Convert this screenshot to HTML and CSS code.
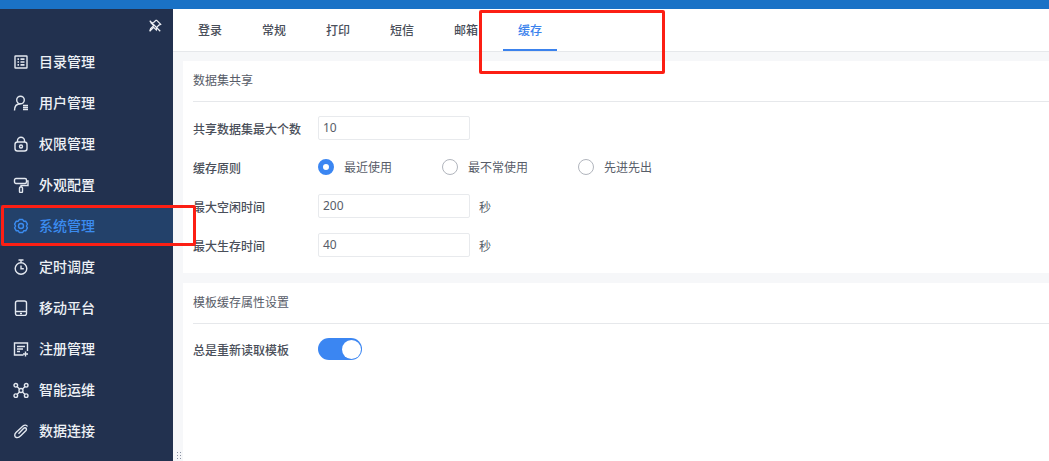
FILE: index.html
```html
<!DOCTYPE html>
<html lang="zh-CN">
<head>
<meta charset="utf-8">
<title>缓存</title>
<link rel="stylesheet" href="styles.css">
</head>
<body>
<div class="topbar"></div>
<div class="main">
  <aside class="sidebar">
    <div class="pin">
      <svg class="pin-icon" viewBox="0 0 16 16"><path d="M10 1.5l4.500 4.500-2 1-2.500 2.500-.5 3L6.500 9.500 3 13 2 14l1-3 3.500-3.500L3.500 4.500l3-.5L9 1.500z"/><path d="M2 2l12 12"/></svg>
    </div>
    <nav class="menu">
      <a class="item"><svg class="ico" viewBox="0 0 16 16"><rect x="2" y="2" width="12" height="12" rx=".5"/><path class="thick" d="M4.500 5.200h1.500M4.500 8h1.500M4.500 10.800h1.500M7.500 5.200H11.500M7.500 8H11.500M7.500 10.800H11.500"/></svg><span class="name">目录管理</span></a>
      <a class="item"><svg class="ico" viewBox="0 0 16 16"><circle cx="7.500" cy="5" r="3.800"/><path d="M1.500 15.500c0-4 2-6.700 6-6.700M10 10.500h5M10 12.500h5M10 14.500h5"/></svg><span class="name">用户管理</span></a>
      <a class="item"><svg class="ico" viewBox="0 0 16 16"><rect x="2" y="6" width="12" height="9" rx="2.500"/><path d="M4.500 6V4.500a3.500 3.300 0 0 1 7 0V6"/><circle cx="8" cy="10.500" r="1.500"/></svg><span class="name">权限管理</span></a>
      <a class="item"><svg class="ico" viewBox="0 0 16 16"><rect x="1.500" y="1.500" width="12" height="5" rx="1.500"/><path d="M13.500 4H15v4.500H8V10"/><rect x="6.500" y="10" width="3" height="5.500" rx="1"/></svg><span class="name">外观配置</span></a>
      <a class="item active"><svg class="ico" viewBox="0 0 16 16"><path class="gear" d="M6.300 1.500H9.700L10.700 3.200 12.700 3.200 14.400 6.200 13.400 8 14.400 9.800 12.700 12.800 10.700 12.800 9.700 14.500H6.300L5.300 12.800 3.300 12.800 1.600 9.800 2.600 8 1.600 6.200 3.300 3.200 5.300 3.200Z"/><circle cx="8" cy="8" r="2.500"/></svg><span class="name">系统管理</span></a>
      <a class="item"><svg class="ico" viewBox="0 0 16 16"><circle cx="8" cy="9.500" r="5.800"/><path d="M5.500 1h5M8 1v2.500M8 6.500v3.300h2.800"/></svg><span class="name">定时调度</span></a>
      <a class="item"><svg class="ico" viewBox="0 0 16 16"><rect x="2.500" y="1" width="11" height="14.500" rx="2"/><path d="M3 11.500h10"/><path class="thick" d="M7 13.500h2"/></svg><span class="name">移动平台</span></a>
      <a class="item"><svg class="ico" viewBox="0 0 16 16"><path d="M10.500 14H1.500V2h13v8"/><path class="thick" d="M4 5.500h8M4 8h6M4 10.500h3"/><path d="M10 13h5M12.500 10.500v5"/></svg><span class="name">注册管理</span></a>
      <a class="item"><svg class="ico" viewBox="0 0 16 16"><circle cx="8" cy="8.500" r="2"/><circle cx="2.800" cy="3.300" r="1.800"/><circle cx="13.200" cy="3.300" r="1.800"/><circle cx="2.800" cy="13.700" r="1.800"/><circle cx="13.200" cy="13.700" r="1.800"/><path d="M4 4.500l2.500 2.500M12 4.500l-2.500 2.500M4 12.500l2.500-2.500M12 12.500l-2.500-2.500"/></svg><span class="name">智能运维</span></a>
      <a class="item"><svg class="ico" viewBox="0 0 16 16"><path d="M14.500 3.500c-1-1.800-3-1.800-4.500-.5L3 9.500c-2 2-1.500 4.500.5 5s3-.5 4.500-2l5-5c1-1.200.3-2.700-1-2.700-.8 0-1.300.5-2 1.200L5.500 10.800"/></svg><span class="name">数据连接</span></a>
    </nav>
  </aside>
  <div class="content">
    <div class="tabs">
      <a class="tab">登录</a>
      <a class="tab">常规</a>
      <a class="tab">打印</a>
      <a class="tab">短信</a>
      <a class="tab">邮箱</a>
      <a class="tab current">缓存</a>
    </div>
    <div class="panels">
      <section class="panel first">
        <h2 class="panel-title">数据集共享</h2>
        <div class="rows">
          <div class="row"><label class="label">共享数据集最大个数</label><div class="input">10</div></div>
          <div class="row">
            <label class="label">缓存原则</label>
            <div class="radios">
              <span class="radio r1 on"><i class="dot"></i><span class="radio-text">最近使用</span></span>
              <span class="radio r2"><i class="dot"></i><span class="radio-text">最不常使用</span></span>
              <span class="radio"><i class="dot"></i><span class="radio-text">先进先出</span></span>
            </div>
          </div>
          <div class="row"><label class="label">最大空闲时间</label><div class="input">200</div><span class="unit">秒</span></div>
          <div class="row"><label class="label">最大生存时间</label><div class="input">40</div><span class="unit">秒</span></div>
        </div>
      </section>
      <section class="panel second">
        <h2 class="panel-title">模板缓存属性设置</h2>
        <div class="rows tight">
          <div class="row"><label class="label">总是重新读取模板</label><span class="switch"><i class="knob"></i></span></div>
        </div>
      </section>
    </div>
  </div>
</div>
<div class="grip"></div>
<div class="mark mark-tab"></div>
<div class="mark mark-side"></div>
</body>
</html>
```
FILE: styles.css
```css
* { box-sizing: border-box; }
html, body { margin: 0; height: 100%; overflow: hidden; }
body {
  display: flex;
  flex-direction: column;
  font-family: "Noto Sans CJK SC", "Liberation Sans", sans-serif;
  font-size: 12px;
  color: #4a5160;
  background: #fff;
  position: relative;
}
.topbar { height: 9px; background: #1a72c6; flex: none; }
.main { flex: 1; display: flex; min-height: 0; }

.sidebar { width: 173px; flex: none; background: #22314f; color: #eef1f6; }
.pin { height: 32px; display: flex; justify-content: flex-end; padding: 10px 11px 0 0; }
.pin-icon { width: 14px; height: 14px; fill: none; stroke: #eef1f6; stroke-width: 1.4; }
.menu { display: flex; flex-direction: column; }
.item {
  height: 41px;
  display: flex;
  align-items: center;
  padding-left: 13px;
  gap: 10px;
  font-size: 14px;
  font-weight: 500;
}
.name { margin-bottom: 2px; }
.ico { width: 16px; height: 16px; fill: none; stroke: #e3e8f0; stroke-width: 1.4; flex: none; }
.thick { stroke-width: 1.7; }
.gear { stroke-linejoin: round; }
.item.active { background: #23416a; color: #3b8cf0; }
.item.active .ico { stroke: #3b8cf0; }

.content { flex: 1; min-width: 0; display: flex; flex-direction: column; background: #fff; }
.tabs {
  height: 43px;
  flex: none;
  display: flex;
  padding-left: 10px;
  border-bottom: 1px solid #e6e8eb;
}
.tab {
  width: 54px;
  margin-right: 10px;
  height: 42px;
  line-height: 42px;
  text-align: center;
  font-size: 12px;
  font-weight: 500;
  color: #4a4f5a;
}
.tab.current { color: #3b82ed; border-bottom: 2px solid #3b82ed; }

.panels { flex: 1; background: #f6f7f9; padding: 9px 0 0 10px; display: flex; flex-direction: column; gap: 10px; }
.panel { background: #fff; padding: 0 0 0 10px; }
.panel.first { height: 212px; }
.panel.second { flex: 1; }
.panel-title {
  margin: 0;
  height: 41px;
  line-height: 38px;
  font-size: 12px;
  font-weight: 400;
  color: #575c68;
  border-bottom: 1px solid #e6e8eb;
}
.rows { display: flex; flex-direction: column; gap: 15px; padding-top: 14px; }
.rows.tight { padding-top: 13px; }
.row { height: 24px; display: flex; align-items: center; }
.label { width: 125px; flex: none; font-weight: 500; color: #4a4f5a; font-size: 12px; }
.input {
  width: 152px;
  height: 24px;
  line-height: 22px;
  border: 1px solid #e8eaed;
  border-radius: 2px;
  padding-left: 4px;
  font-size: 12px;
  font-family: "Noto Sans", sans-serif;
  color: #585d69;
}
.unit { margin-left: 9px; color: #585d69; }
.radios { display: flex; }
.radio { display: flex; align-items: center; gap: 10px; color: #585d69; }
.radio-text { margin-bottom: 2px; }
.r1 { width: 124px; }
.r2 { width: 136px; }
.dot { width: 16px; height: 16px; border-radius: 50%; border: 1px solid #b1b5bd; flex: none; background: #fff; }
.on .dot { border: 5px solid #3b86f2; }
.switch {
  width: 44px;
  height: 22px;
  border-radius: 11px;
  background: #3b86f2;
  display: flex;
  justify-content: flex-end;
  align-items: center;
  padding-right: 1px;
}
.knob { width: 19px; height: 19px; border-radius: 50%; background: #fff; }

.grip {
  position: absolute;
  left: 176px;
  bottom: 0;
  width: 5px;
  height: 10px;
  background-image: radial-gradient(#8b93a3 1px, transparent 1px);
  background-size: 3px 3px;
}
.mark { position: absolute; border: 3px solid #fc1f14; border-radius: 2px; }
.mark-tab { left: 479px; top: 10px; width: 186px; height: 64px; }
.mark-side { left: 1px; top: 205px; width: 195px; height: 41px; }
```
